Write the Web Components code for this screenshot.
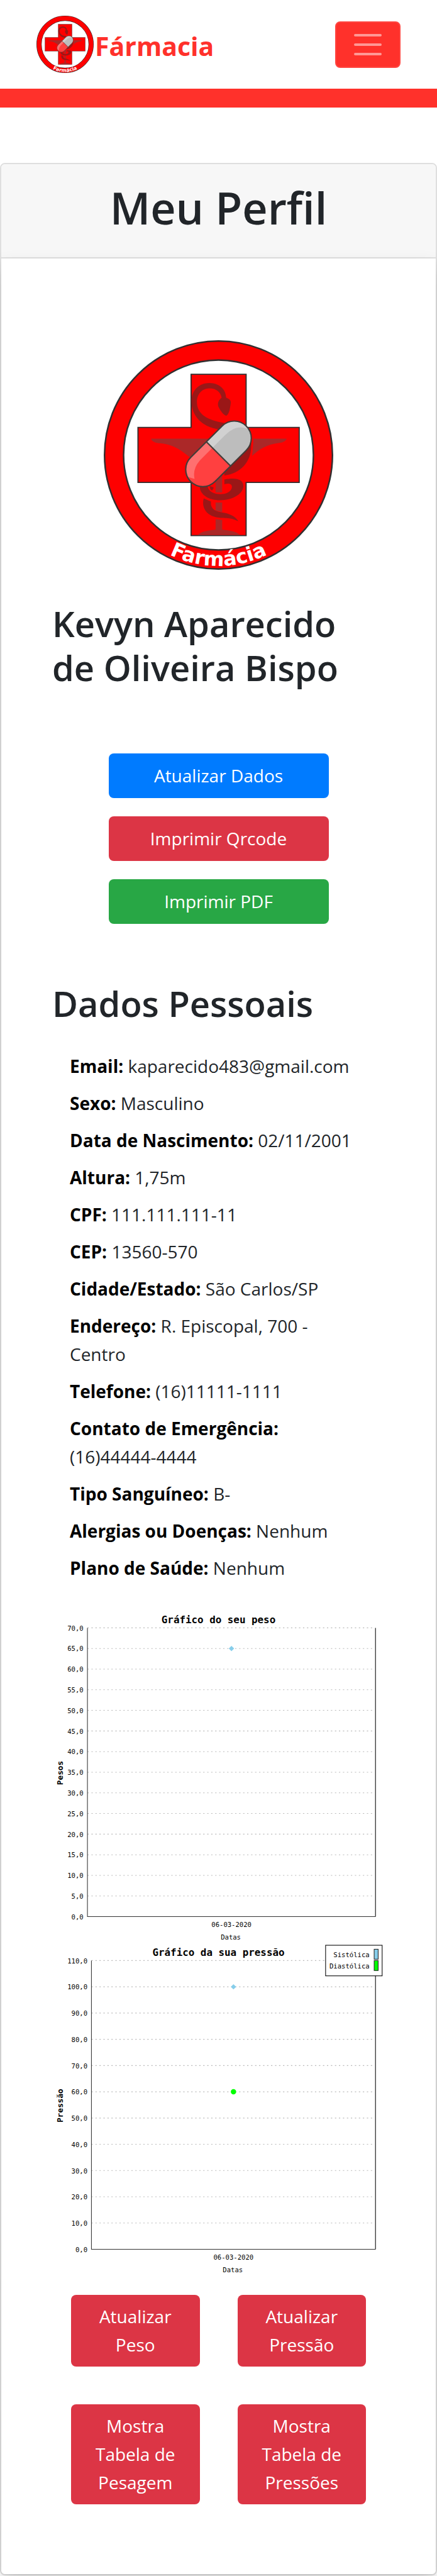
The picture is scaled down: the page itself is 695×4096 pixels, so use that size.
<!DOCTYPE html>
<html lang="pt-BR">
<head>
<meta charset="utf-8">
<meta name="viewport" content="width=device-width, initial-scale=1">
<title>Fármacia - Meu Perfil</title>
<style>
  body {
    margin: 0;
    background: #fff;
    color: #212529;
    font-family: "Open Sans", "Noto Sans", sans-serif;
    font-size: 28px;
    line-height: 45px;
  }
</style>
</head>
<body>
<farm-header></farm-header>
<profile-card heading="Meu Perfil">
  <profile-person name="Kevyn Aparecido de Oliveira Bispo"></profile-person>
  <action-list>
    <action-button tone="primary">Atualizar Dados</action-button>
    <action-button tone="danger">Imprimir Qrcode</action-button>
    <action-button tone="success">Imprimir PDF</action-button>
  </action-list>
  <info-section heading="Dados Pessoais">
    <info-item label="Email">kaparecido483@gmail.com</info-item>
    <info-item label="Sexo">Masculino</info-item>
    <info-item label="Data de Nascimento">02/11/2001</info-item>
    <info-item label="Altura">1,75m</info-item>
    <info-item label="CPF">111.111.111-11</info-item>
    <info-item label="CEP">13560-570</info-item>
    <info-item label="Cidade/Estado">São Carlos/SP</info-item>
    <info-item label="Endereço">R. Episcopal, 700 - Centro</info-item>
    <info-item label="Telefone">(16)11111-1111</info-item>
    <info-item label="Contato de Emergência">(16)44444-4444</info-item>
    <info-item label="Tipo Sanguíneo">B-</info-item>
    <info-item label="Alergias ou Doenças">Nenhum</info-item>
    <info-item label="Plano de Saúde">Nenhum</info-item>
  </info-section>
  <chart-stack>
    <health-chart kind="weight"></health-chart>
    <health-chart kind="pressure"></health-chart>
  </chart-stack>
  <action-grid>
    <action-button tone="danger">Atualizar Peso</action-button>
    <action-button tone="danger">Atualizar Pressão</action-button>
    <action-button tone="danger">Mostra Tabela de Pesagem</action-button>
    <action-button tone="danger">Mostra Tabela de Pressões</action-button>
  </action-grid>
</profile-card>

<script>
class BaseElement extends HTMLElement {
  connectedCallback() {
    if (!this.shadowRoot) {
      this.attachShadow({ mode: "open" }).innerHTML = this.render();
    }
  }
}

customElements.define("farm-logo", class extends BaseElement {
  render() {
    return `
    <style>
      :host { display: block; }
      svg { display: block; width: 100%; height: auto; }
    </style>
    <svg viewBox="88 70 1180 1180" role="img" aria-label="Farmácia">
      <defs>
        <path id="arc" d="M 108 660 A 570 570 0 0 0 1248 660"/>
        <clipPath id="pill"><rect x="-88" y="-202" width="176" height="404" rx="88"/></clipPath>
      </defs>
      <circle cx="678" cy="660" r="537" fill="none" stroke="#322f30" stroke-width="106"/>
      <circle cx="678" cy="660" r="537" fill="none" stroke="#fe0000" stroke-width="90"/>
      <path d="M537 245H820V518H1093V801H820V1074H537V801H264V518H537Z" fill="#fe0000" stroke="#322f30" stroke-width="6"/>
      <path d="M331 576H1029Q1022 594 990 598C925 606 885 632 851 665L697 760V852H663V760L526 668C470 622 430 602 370 599Q335 595 331 576Z" fill="#ab2828"/>
      <path d="M720 700L846 576H858L851 665L780 730Z" fill="#fe0000"/>
      <path d="M663 904H697V953L663 945ZM663 990L697 994V1043C725 1049 758 1046 790 1071H570C600 1046 635 1049 663 1043Z" fill="#ab2828"/>
      <path d="M717 365C742 375 743 385 740 400C736 430 732 448 719 458C702 455 685 427 677 410C671 389 682 375 694 366C690 336 665 316 630 317C590 318 567 350 567 388C567 450 620 482 710 496L680 528C590 515 539 455 539 385C539 325 580 290 632 290C680 292 715 318 717 365Z" fill="#9a1717"/>
      <path d="M846 600C851 695 790 755 708 765V735L820 620Z" fill="#9a1717"/>
      <path d="M708 786C765 774 807 783 806 822C803 864 744 893 687 893C625 893 580 862 582 820L622 822C628 850 655 861 688 861C720 861 747 846 747 823C746 807 730 804 708 810Z" fill="#9a1717"/>
      <path d="M633 820L652 826V832L645 843Q634 838 633 820ZM602 883L639 899C636 930 652 948 695 955C735 961 765 975 780 1000C752 987 730 983 690 983C622 980 588 935 602 883Z" fill="#9a1717"/>
      <g transform="translate(678 654) rotate(45)">
        <g clip-path="url(#pill)">
          <rect x="-96" y="-202" width="192" height="202" fill="#bdbdbd"/>
          <rect x="-96" y="0" width="192" height="202" fill="#ff4040"/>
          <path d="M-96 -202H40Q-44 -190 -44 -95V0H-96Z" fill="#d1d1d1"/>
          <path d="M-96 0H-44V92Q-40 150 4 178L-40 202H-96Z" fill="#ff7070"/>
        </g>
        <path d="M-88 0H88" stroke="#423c39" stroke-width="7"/>
        <rect x="-88" y="-202" width="176" height="404" rx="88" fill="none" stroke="#423c39" stroke-width="7"/>
      </g>
      <text font-family="DejaVu Sans, sans-serif" font-weight="700" font-size="102" fill="#fff" text-anchor="middle"><textPath href="#arc" startOffset="50%">Farmácia</textPath></text>
    </svg>`;
  }
});

customElements.define("farm-header", class extends BaseElement {
  render() {
    return `
    <style>
      :host { display: block; border-bottom: 30px solid #ff312b; }
      header { display: flex; align-items: center; justify-content: space-between; height: 141px; padding: 0 58px; }
      a { display: flex; align-items: center; gap: 2px; color: #ff312b; font-size: 41px; font-weight: 700; line-height: 62px; text-decoration: none; }
      farm-logo { width: 91px; }
      span { padding-top: 4px; }
      button { display: flex; flex-direction: column; align-items: center; justify-content: center; gap: 11px; width: 104px; height: 74px; padding: 0; background: #ff312b; border: 2px solid #ff4641; border-radius: 8px; }
      i { width: 44px; height: 4px; border-radius: 2px; background: #ff9895; }
    </style>
    <header>
      <a href="#"><farm-logo></farm-logo><span>Fármacia</span></a>
      <button type="button" aria-label="Abrir menu"><i></i><i></i><i></i></button>
    </header>`;
  }
});

customElements.define("profile-card", class extends BaseElement {
  render() {
    return `
    <style>
      :host { display: block; box-sizing: border-box; margin: 88px 0 1px; border: 2px solid #dfdfdf; border-radius: 8px; }
      header { padding: 25px 20px 34px; background: #f7f7f7; border-bottom: 2px solid #dfdfdf; border-radius: 6px 6px 0 0; }
      h1 { margin: 0; font-size: 70px; font-weight: 600; line-height: 89px; text-align: center; }
      section { padding: 130px 81px 111px; background: #fff; border-radius: 0 0 6px 6px; box-shadow: 0 15px 30px rgba(0, 0, 0, .15); }
    </style>
    <header><h1>${this.getAttribute("heading")}</h1></header>
    <section><slot></slot></section>`;
  }
});

customElements.define("profile-person", class extends BaseElement {
  render() {
    return `
    <style>
      :host { display: block; }
      farm-logo { width: 365px; max-width: 100%; margin: 0 auto 50px; }
      h2 { margin: 0; font-size: 56px; font-weight: 600; line-height: 70px; }
    </style>
    <farm-logo></farm-logo>
    <h2>${this.getAttribute("name")}</h2>`;
  }
});

customElements.define("action-list", class extends BaseElement {
  render() {
    return `
    <style>
      :host { display: flex; flex-direction: column; gap: 29px; max-width: 350px; margin: 102px auto 91px; }
    </style>
    <slot></slot>`;
  }
});

customElements.define("action-grid", class extends BaseElement {
  render() {
    return `
    <style>
      :host { display: grid; grid-template-columns: 1fr 1fr; gap: 60px; margin: 28px 30px 0; --button-padding: 12px 30px; }
    </style>
    <slot></slot>`;
  }
});

customElements.define("action-button", class extends BaseElement {
  render() {
    const tones = { primary: "#007bff", danger: "#dc3545", success: "#28a745" };
    return `
    <style>
      :host { display: block; }
      button { display: block; width: 100%; padding: var(--button-padding, 13px 20px); border: 0; border-radius: 8px; background: ${tones[this.getAttribute("tone")]}; color: #fff; font: inherit; text-align: center; }
    </style>
    <button type="button"><slot></slot></button>`;
  }
});

customElements.define("info-section", class extends BaseElement {
  render() {
    return `
    <style>
      :host { display: block; }
      h2 { margin: 0 0 43px; font-size: 56px; font-weight: 600; line-height: 70px; }
      div { display: flex; flex-direction: column; gap: 14px; padding: 0 40px 0 28px; }
    </style>
    <h2>${this.getAttribute("heading")}</h2>
    <div><slot></slot></div>`;
  }
});

customElements.define("info-item", class extends BaseElement {
  render() {
    return `
    <style>
      :host { display: block; }
      b { color: #000; font-weight: 700; }
    </style>
    <b>${this.getAttribute("label")}:</b> <slot></slot>`;
  }
});

customElements.define("chart-stack", class extends BaseElement {
  render() {
    return `
    <style>
      :host { display: flex; flex-direction: column; margin-top: 47px; }
    </style>
    <slot></slot>`;
  }
});

const CHARTS = {
  weight: {
    title: "Gráfico do seu peso", axis: "Pesos", max: 70, step: 5, left: 53,
    points: [{ value: 65, shape: "diamond" }]
  },
  pressure: {
    title: "Gráfico da sua pressăo", axis: "Pressăo", max: 110, step: 10, left: 59,
    points: [{ value: 100, shape: "diamond" }, { value: 60, shape: "dot" }],
    legend: true
  }
};

customElements.define("health-chart", class extends BaseElement {
  render() {
    const c = CHARTS[this.getAttribute("kind")];
    const top = 24, bottom = 458, right = 486;
    const mid = (c.left + right) / 2;
    const y = v => bottom - (bottom - top) * v / c.max;
    let rows = "";
    for (let v = 0; v <= c.max; v += c.step) {
      if (v) rows += `<path class="grid" d="M${c.left} ${y(v)}H${right - 2}"/>`;
      rows += `<text x="${c.left - 6}" y="${y(v) + 4}" text-anchor="end">${v},0</text>`;
    }
    const points = c.points.map(p => p.shape === "dot"
      ? `<circle cx="${mid}" cy="${y(p.value)}" r="4" fill="#0f0"/>`
      : `<path d="M${mid - 4} ${y(p.value)}l4 -4l4 4l-4 4z" fill="#87ceeb"/>`).join("");
    const legend = c.legend ? `
      <rect x="411" y="1" width="85" height="46" fill="#fff" stroke="#000"/>
      <text x="477" y="19" text-anchor="end">Sistólica</text>
      <text x="477" y="36" text-anchor="end">Diastólica</text>
      <rect x="484" y="7" width="6" height="15" fill="#87ceeb" stroke="#222"/>
      <rect x="484" y="24" width="6" height="15" fill="#0f0" stroke="#222"/>` : "";
    return `
    <style>
      :host { display: block; }
      svg { display: block; width: 100%; height: auto; font-family: "DejaVu Sans Mono", monospace; font-size: 10px; line-height: 1; }
      text { fill: #000; }
      .title { font-size: 15px; font-weight: 700; }
      .side { font-size: 12px; font-weight: 700; }
      .grid { fill: none; stroke: #bbb; stroke-dasharray: 2 4; }
    </style>
    <svg viewBox="0 0 500 500" role="img" aria-label="${c.title}">
      ${rows}
      <path d="M${c.left} ${top}V${bottom}H${right}" fill="none" stroke="#333"/>
      <path d="M${right} ${top}V${bottom}" stroke="#000"/>
      ${points}
      <text class="title" x="250" y="17" text-anchor="middle">${c.title}</text>
      <text class="side" transform="translate(16 242) rotate(-90)" text-anchor="middle">${c.axis}</text>
      <text x="${mid}" y="474" text-anchor="middle">06-03-2020</text>
      <text x="${mid - 1}" y="492" text-anchor="middle">Datas</text>
      ${legend}
    </svg>`;
  }
});
</script>
</body>
</html>
